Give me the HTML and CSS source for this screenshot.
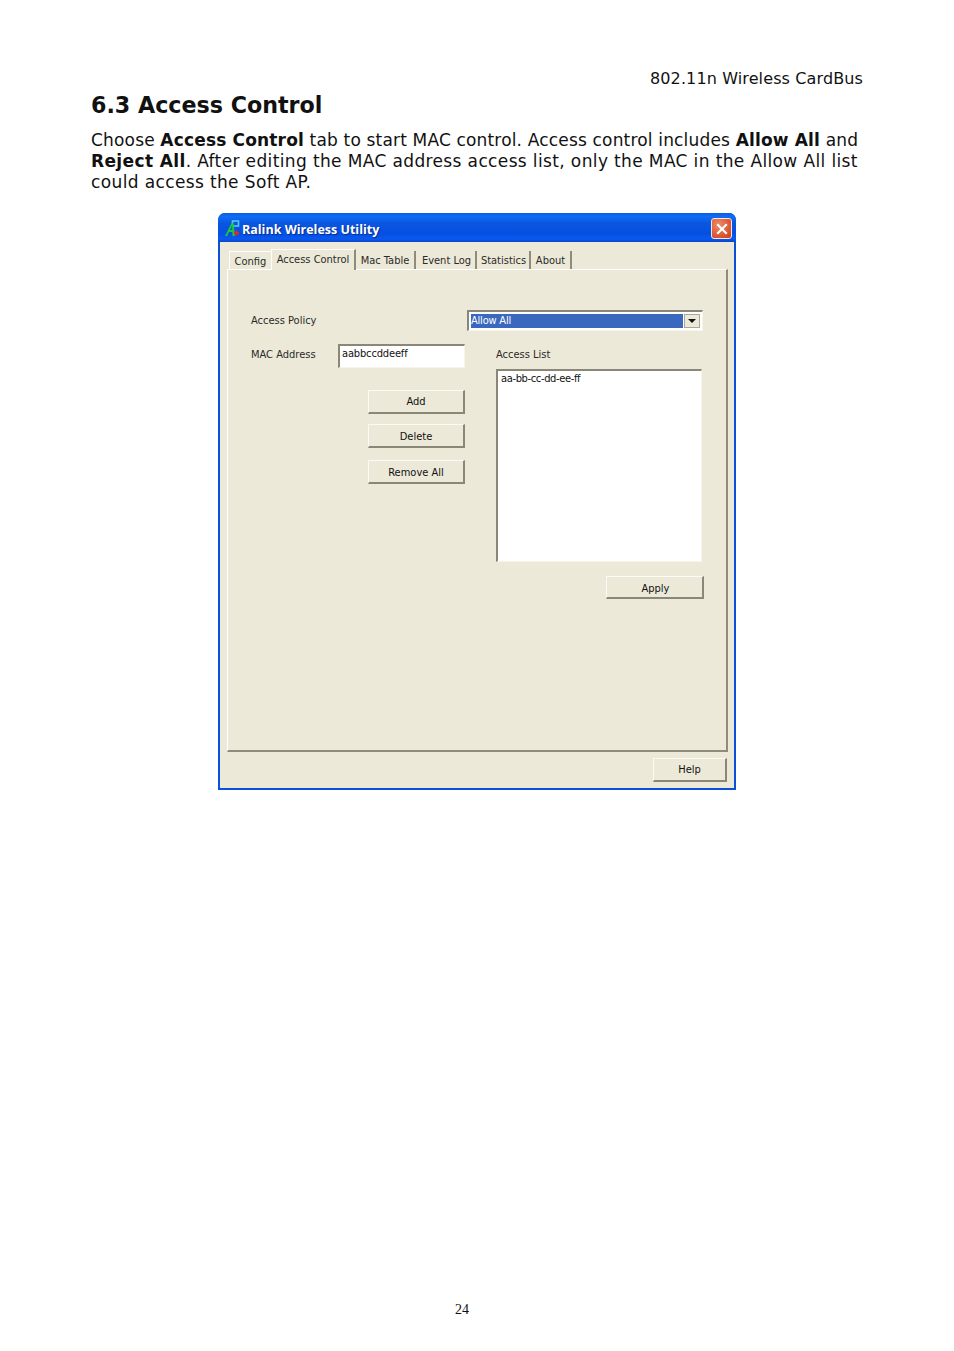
FILE: index.html
```html
<!DOCTYPE html>
<html lang="en">
<head>
<meta charset="utf-8">
<title>6.3 Access Control</title>
<link rel="stylesheet" href="styles.css">
</head>
<body>
<div class="page">
  <header class="running-head">802.11n Wireless CardBus</header>
  <h1 class="heading">6.3 Access Control</h1>
  <p class="intro"><span class="line-first">Choose <b>Access Control</b> tab to start MAC control. Access control includes <b>Allow All</b> and</span><br><b>Reject All</b>. After editing the MAC address access list, only the MAC in the Allow All list<br>could access the Soft AP.</p>

  <div class="window">
    <div class="titlebar">
      <svg class="app-icon" width="17" height="18" viewBox="0 0 17 18">
        <rect x="8.5" y="1" width="6" height="5" fill="none" stroke="#59c6f0" stroke-width="1.6"/>
        <path d="M1 16 L7.5 3 L9.5 3 L11 16 L8.5 16 L8.2 12 L5 12 L3.2 16 Z" fill="#1fc53a"/>
        <path d="M6 10 L8 6 L8.2 10 Z" fill="#0a5be0"/>
        <path d="M10 13 h5 M12.5 10.5 v5" stroke="#e5262c" stroke-width="2"/>
      </svg>
      <span class="title">Ralink Wireless Utility</span>
      <span class="close">
        <svg width="12" height="12" viewBox="0 0 12 12"><path d="M2 2 L10 10 M10 2 L2 10" stroke="#fff" stroke-width="2.2" stroke-linecap="square"/></svg>
      </span>
    </div>
    <div class="client">
      <div class="tabs">
        <span class="tab tab-config">Config</span>
        <span class="tab tab-active">Access Control</span>
        <span class="tab tab-mac">Mac Table</span>
        <span class="tab tab-event">Event Log</span>
        <span class="tab tab-stats">Statistics</span>
        <span class="tab tab-about">About</span>
      </div>
      <div class="panel">
        <div class="policy-row">
          <span class="label">Access Policy</span>
          <div class="combo">
            <span class="combo-value"><span class="combo-text">Allow All</span></span>
            <span class="combo-arrow"></span>
          </div>
        </div>
        <div class="columns">
          <div class="col-left">
            <div class="mac-row">
              <span class="label label-mac">MAC Address</span>
              <span class="field">aabbccddeeff</span>
            </div>
            <div class="actions">
              <span class="btn btn-add">Add</span>
              <span class="btn btn-delete">Delete</span>
              <span class="btn btn-remove">Remove All</span>
            </div>
          </div>
          <div class="col-right">
            <span class="label label-list">Access List</span>
            <div class="listbox">aa-bb-cc-dd-ee-ff</div>
            <div class="apply-row"><span class="btn btn-apply">Apply</span></div>
          </div>
        </div>
      </div>
      <div class="help-row"><span class="btn btn-help">Help</span></div>
    </div>
  </div>

  <footer class="page-number">24</footer>
</div>
</body>
</html>
```
FILE: styles.css
```css
* { box-sizing: border-box; }
html, body { margin: 0; padding: 0; background: #fff; }
.page {
  width: 954px;
  height: 1351px;
  overflow: hidden;
  display: flex;
  flex-direction: column;
  padding: 69px 91px 0;
  font-family: "DejaVu Sans", Verdana, sans-serif;
  color: #111;
}
.running-head { text-align: right; font-size: 16px; line-height: 19px; letter-spacing: 0.12px; }
.heading { margin: 3px 0 0; font-size: 22.2px; line-height: 28px; font-weight: 700; }
.intro { margin: 11px 0 0; font-size: 17px; line-height: 21px; white-space: nowrap; letter-spacing: 0.37px; }
.line-first { letter-spacing: 0.17px; }

.window {
  align-self: flex-start;
  margin: 20px 0 0 127px;
  width: 518px;
  height: 577px;
  display: flex;
  flex-direction: column;
  border-radius: 7px 7px 0 0;
  background: #0a50d8;
  font-family: "DejaVu Sans Condensed", "Liberation Sans", Arial, sans-serif;
  font-stretch: condensed;
  font-size: 11px;
  color: #2a2a2a;
  overflow: hidden;
}
.titlebar {
  height: 29px;
  flex: none;
  display: flex;
  align-items: center;
  padding: 2px 4px 0 6px;
  background: linear-gradient(#0a5ae6 0, #0f6cf4 12%, #0a56e0 35%, #0550e2 70%, #0a58ee 90%, #0844c8 100%);
}
.app-icon { flex: none; }
.title {
  margin: 1px 0 0 1px;
  font-family: "Open Sans", "Liberation Sans", sans-serif;
  font-stretch: normal;
  font-weight: 700;
  font-size: 12.5px;
  color: #fff;
  text-shadow: 1px 1px 1px #0a2a90;
  flex: 1;
}
.close {
  width: 21px;
  height: 21px;
  display: flex;
  align-items: center;
  justify-content: center;
  border: 1px solid #f4e6e0;
  border-radius: 3px;
  background: radial-gradient(circle at 35% 30%, #ee8a66, #dc5a36 60%, #c8401e);
}
.client {
  flex: 1;
  margin: 0 2px 2px;
  padding: 7px 7px 0 7px;
  background: #ece9d8;
  display: flex;
  flex-direction: column;
}
.tabs { display: flex; height: 20px; flex: none; align-items: flex-end; padding-left: 2px; position: relative; z-index: 1; }
.tab {
  height: 18px;
  padding-top: 3px;
  text-align: center;
  border-right: 2px solid #8f8c7c;
  white-space: nowrap;
}
.tab-config { width: 42px; border-top: 1px solid #fff; border-left: 1px solid #fff; border-right: 0; }
.tab-active {
  width: 85px;
  height: 21px;
  padding-top: 3px;
  margin-bottom: -1px;
  background: #ece9d8;
  border-top: 1px solid #fff;
  border-left: 1px solid #fff;
}
.tab-mac { width: 60px; }
.tab-event { width: 61px; padding-left: 2px; }
.tab-stats { width: 54px; padding-left: 1px; }
.tab-about { width: 41px; }

.panel {
  width: 501px;
  height: 483px;
  flex: none;
  padding: 40px 23px 0;
  border-top: 1px solid #fff;
  border-left: 1px solid #fff;
  border-right: 2px solid #8f8c7c;
  border-bottom: 2px solid #8f8c7c;
}
.policy-row { display: flex; align-items: center; justify-content: space-between; width: 452px; height: 21px; }
.combo {
  width: 236px;
  height: 21px;
  display: flex;
  align-items: stretch;
  padding: 2px;
  background: #fff;
  border-top: 2px solid #8a8778;
  border-left: 2px solid #8a8778;
  border-right: 1px solid #f6f4ec;
  border-bottom: 1px solid #f6f4ec;
  gap: 1px;
}
.combo-value { flex: 1; background: #3a68bf; color: #fff; padding-left: 0; line-height: 14px; letter-spacing: -0.2px; }
.combo-arrow {
  width: 16px;
  background: #ece9d8;
  border: 1px solid #a9a796;
  display: flex;
  align-items: center;
  justify-content: center;
}
.combo-arrow::before {
  content: "";
  border-left: 4px solid transparent;
  border-right: 4px solid transparent;
  border-top: 4px solid #111;
}
.columns { display: flex; margin-top: 13px; }
.col-left { width: 214px; flex: none; }
.col-right { margin-left: 31px; width: 208px; flex: none; }
.mac-row { display: flex; align-items: center; height: 24px; }
.label-mac { width: 87px; flex: none; margin-top: -4px; }
.field {
  width: 127px;
  height: 24px;
  background: #fff;
  padding-left: 2px;
  line-height: 15px;
  border-top: 2px solid #8a8778;
  border-left: 2px solid #8a8778;
  border-right: 1px solid #f6f4ec;
  border-bottom: 1px solid #f6f4ec;
  color: #111;
  letter-spacing: -0.15px;
}
.actions { display: flex; flex-direction: column; align-items: flex-end; margin-top: 22px; }
.btn {
  display: flex;
  align-items: center;
  justify-content: center;
  background: #ece9d8;
  border-top: 1px solid #fbfaf4;
  border-left: 1px solid #fbfaf4;
  border-right: 2px solid #8a8778;
  border-bottom: 2px solid #8a8778;
  color: #111;
  padding-bottom: 1px;
}
.btn-add { width: 97px; height: 24px; }
.btn-delete { width: 97px; height: 24px; margin-top: 10px; padding-bottom: 0; padding-top: 1px; }
.btn-remove { width: 97px; height: 24px; margin-top: 12px; padding-bottom: 0; padding-top: 1px; }
.label-list { display: block; height: 22px; line-height: 16px; margin-top: 3px; }
.listbox {
  width: 206px;
  height: 193px;
  background: #fff;
  padding: 1px 0 0 3px;
  line-height: 13px;
  border-top: 2px solid #8a8778;
  border-left: 2px solid #8a8778;
  border-right: 1px solid #f6f4ec;
  border-bottom: 1px solid #f6f4ec;
  color: #111;
  letter-spacing: -0.35px;
}
.apply-row { display: flex; justify-content: flex-end; margin-top: 14px; }
.btn-apply { width: 98px; height: 23px; padding: 3px 0 0 2px; }
.help-row { display: flex; justify-content: flex-end; padding-top: 6px; }
.btn-help { width: 74px; height: 24px; }

.page-number {
  margin-top: auto;
  margin-bottom: 32px;
  padding-left: 364px;
  font-family: "Liberation Serif", "Times New Roman", serif;
  font-size: 14px;
  line-height: 18px;
}
```
